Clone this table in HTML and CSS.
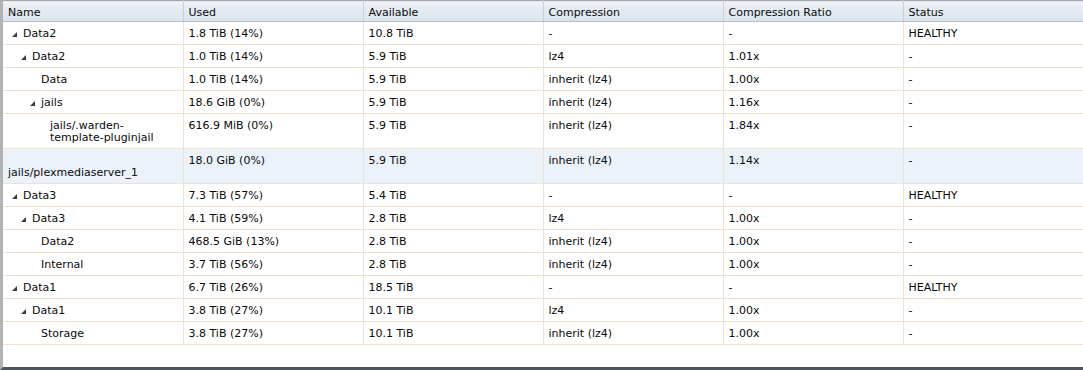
FILE: index.html
```html
<!DOCTYPE html>
<html>
<head>
<meta charset="utf-8">
<link rel="stylesheet" href="styles.css">
</head>
<body>
<div class="grid">
  <table class="tree">
    <colgroup>
      <col class="c"><col class="c"><col class="c"><col class="c"><col class="c"><col class="c">
    </colgroup>
    <thead>
      <tr>
        <th>Name</th><th>Used</th><th>Available</th><th>Compression</th><th>Compression Ratio</th><th>Status</th>
      </tr>
    </thead>
    <tbody>
      <tr>
        <td><div class="node"><span class="ind l0"></span><span class="exp"><svg viewBox="0 0 5 5" width="5" height="5"><polygon points="5,0 5,5 0,5"/></svg></span><span class="lbl">Data2</span></div></td>
        <td>1.8 TiB (14%)</td><td>10.8 TiB</td><td>-</td><td>-</td><td>HEALTHY</td>
      </tr>
      <tr>
        <td><div class="node"><span class="ind l1"></span><span class="exp"><svg viewBox="0 0 5 5" width="5" height="5"><polygon points="5,0 5,5 0,5"/></svg></span><span class="lbl">Data2</span></div></td>
        <td>1.0 TiB (14%)</td><td>5.9 TiB</td><td>lz4</td><td>1.01x</td><td>-</td>
      </tr>
      <tr>
        <td><div class="node"><span class="ind l2"></span><span class="exp"></span><span class="lbl">Data</span></div></td>
        <td>1.0 TiB (14%)</td><td>5.9 TiB</td><td>inherit (lz4)</td><td>1.00x</td><td>-</td>
      </tr>
      <tr>
        <td><div class="node"><span class="ind l2"></span><span class="exp"><svg viewBox="0 0 5 5" width="5" height="5"><polygon points="5,0 5,5 0,5"/></svg></span><span class="lbl">jails</span></div></td>
        <td>18.6 GiB (0%)</td><td>5.9 TiB</td><td>inherit (lz4)</td><td>1.16x</td><td>-</td>
      </tr>
      <tr>
        <td><div class="node"><span class="ind l3"></span><span class="exp"></span><span class="lbl">jails/.warden-<span class="nw">template-pluginjail</span></span></div></td>
        <td>616.9 MiB (0%)</td><td>5.9 TiB</td><td>inherit (lz4)</td><td>1.84x</td><td>-</td>
      </tr>
      <tr class="sel">
        <td><div class="node"><span class="ind l3"></span><span class="exp"></span><span class="lbl nw">jails/plexmediaserver_1</span></div></td>
        <td>18.0 GiB (0%)</td><td>5.9 TiB</td><td>inherit (lz4)</td><td>1.14x</td><td>-</td>
      </tr>
      <tr>
        <td><div class="node"><span class="ind l0"></span><span class="exp"><svg viewBox="0 0 5 5" width="5" height="5"><polygon points="5,0 5,5 0,5"/></svg></span><span class="lbl">Data3</span></div></td>
        <td>7.3 TiB (57%)</td><td>5.4 TiB</td><td>-</td><td>-</td><td>HEALTHY</td>
      </tr>
      <tr>
        <td><div class="node"><span class="ind l1"></span><span class="exp"><svg viewBox="0 0 5 5" width="5" height="5"><polygon points="5,0 5,5 0,5"/></svg></span><span class="lbl">Data3</span></div></td>
        <td>4.1 TiB (59%)</td><td>2.8 TiB</td><td>lz4</td><td>1.00x</td><td>-</td>
      </tr>
      <tr>
        <td><div class="node"><span class="ind l2"></span><span class="exp"></span><span class="lbl">Data2</span></div></td>
        <td>468.5 GiB (13%)</td><td>2.8 TiB</td><td>inherit (lz4)</td><td>1.00x</td><td>-</td>
      </tr>
      <tr>
        <td><div class="node"><span class="ind l2"></span><span class="exp"></span><span class="lbl">Internal</span></div></td>
        <td>3.7 TiB (56%)</td><td>2.8 TiB</td><td>inherit (lz4)</td><td>1.00x</td><td>-</td>
      </tr>
      <tr>
        <td><div class="node"><span class="ind l0"></span><span class="exp"><svg viewBox="0 0 5 5" width="5" height="5"><polygon points="5,0 5,5 0,5"/></svg></span><span class="lbl">Data1</span></div></td>
        <td>6.7 TiB (26%)</td><td>18.5 TiB</td><td>-</td><td>-</td><td>HEALTHY</td>
      </tr>
      <tr>
        <td><div class="node"><span class="ind l1"></span><span class="exp"><svg viewBox="0 0 5 5" width="5" height="5"><polygon points="5,0 5,5 0,5"/></svg></span><span class="lbl">Data1</span></div></td>
        <td>3.8 TiB (27%)</td><td>10.1 TiB</td><td>lz4</td><td>1.00x</td><td>-</td>
      </tr>
      <tr>
        <td><div class="node"><span class="ind l2"></span><span class="exp"></span><span class="lbl">Storage</span></div></td>
        <td>3.8 TiB (27%)</td><td>10.1 TiB</td><td>inherit (lz4)</td><td>1.00x</td><td>-</td>
      </tr>
    </tbody>
  </table>
</div>
</body>
</html>
```
FILE: styles.css
```css
html, body {
  margin: 0;
  padding: 0;
  background: #ffffff;
}
.grid {
  box-sizing: border-box;
  width: 1083px;
  height: 370px;
  border-left: 3px solid #b3b3b3;
  border-bottom: 3px solid #4f555d;
  background: #ffffff;
  overflow: hidden;
  font-family: "DejaVu Sans", Verdana, sans-serif;
  font-size: 11px;
  color: #0a0a0a;
}
.tree {
  border-collapse: collapse;
  table-layout: fixed;
  width: 1080px;
}
.tree col.c {
  width: 180px;
}
.tree th {
  height: 20px;
  box-sizing: border-box;
  padding: 6px 5px 2px;
  text-align: left;
  vertical-align: top;
  font-weight: normal;
  line-height: 12px;
  background: linear-gradient(#eef2f7, #d9e2ec);
  border-top: 1px solid #a3a3a3;
  border-bottom: 1px solid #b9bec4;
  border-right: 1px solid #c9d0d8;
  color: #0a0a0a;
}
.tree td {
  padding: 6px 5px 4px;
  line-height: 12px;
  vertical-align: top;
  border-bottom: 1px solid #efe2d5;
  border-right: 1px solid #efe2d5;
}
.tree tr.sel td {
  background: #ecf2fa;
}
.node {
  display: flex;
  flex-wrap: wrap;
  align-items: flex-start;
}
.ind {
  flex: none;
  height: 12px;
}
.ind.l0 { width: 0; }
.ind.l1 { width: 9px; }
.ind.l2 { width: 18px; }
.ind.l3 { width: 27px; }
.exp {
  flex: none;
  width: 15px;
  height: 12px;
}
.exp svg {
  display: block;
  margin: 4px 0 0 4px;
  fill: #3a3a3a;
}
.lbl {
  flex: 1 1 0;
  min-width: min-content;
}
.nw {
  white-space: nowrap;
}
```
